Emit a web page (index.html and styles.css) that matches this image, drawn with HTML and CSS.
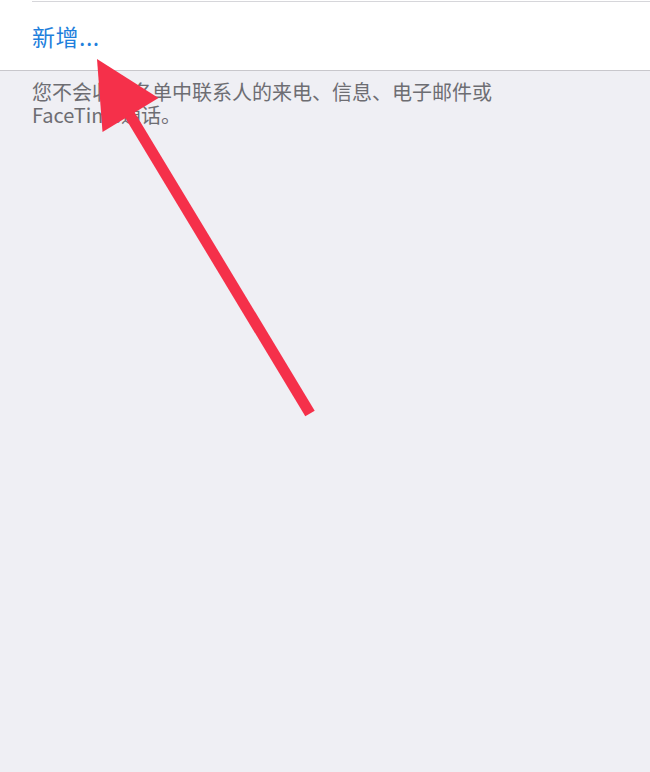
FILE: index.html
```html
<!DOCTYPE html>
<html lang="zh-CN">
<head>
<meta charset="utf-8">
<title>阻止名单</title>
<link rel="stylesheet" href="styles.css">
</head>
<body>
<div class="page">
  <div class="group">
    <div class="row">
      <span class="add">新增...</span>
    </div>
  </div>
  <p class="footer">您不会收到名单中联系人的来电、信息、电子邮件或 FaceTime通话。</p>
  <svg class="arrow" width="650" height="772" viewBox="0 0 650 772" aria-hidden="true">
    <line x1="128" y1="112" x2="310" y2="413.5" stroke="#f5304a" stroke-width="11"/>
    <polygon points="97,59 102.5,132 158.5,98" fill="#f5304a"/>
  </svg>
</div>
</body>
</html>
```
FILE: styles.css
```css
html, body {
  margin: 0;
  padding: 0;
  background: #efeff4;
}
.page {
  position: relative;
  width: 650px;
  height: 772px;
  overflow: hidden;
  font-family: "Noto Sans CJK SC", "Noto Sans", sans-serif;
}
.group {
  background: #ffffff;
  border-bottom: 1px solid #c8c7cc;
  padding-top: 1px;
}
.row {
  margin-left: 32px;
  border-top: 1px solid #d6d6da;
  height: 68px;
  display: flex;
  align-items: center;
}
.add {
  color: #1f7fdc;
  font-size: 23px;
  line-height: 1;
  letter-spacing: 0.5px;
}
.footer {
  margin: 0;
  padding: 9px 32px 0 32px;
  max-width: 480px;
  color: #6d6d72;
  font-size: 20px;
  line-height: 23px;
}
.arrow {
  position: absolute;
  top: 0;
  left: 0;
  pointer-events: none;
}
```
